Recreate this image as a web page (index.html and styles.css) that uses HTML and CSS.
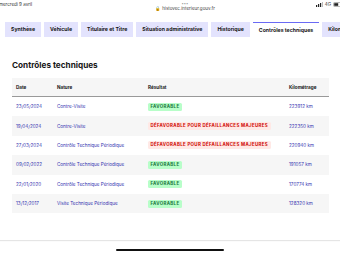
FILE: index.html
```html
<!DOCTYPE html>
<html lang="fr">
<head>
    <meta charset="UTF-8">
    <meta name="viewport" content="width=device-width, initial-scale=1.0">
    <title>HistoVec - Contrôles techniques</title>
    <link rel="stylesheet" href="styles.css">
</head>
<body>
    <div class="statusbar">
        <div class="status-left">mercredi 9 avril</div>
        <div class="status-center">
            <div class="dots">•••</div>
            <div class="url">&#128274; histovec.interieur.gouv.fr</div>
        </div>
        <div class="status-right">
            <svg width="7" height="5" viewBox="0 0 7 5"><rect x="0" y="3" width="1.2" height="2" fill="#222"/><rect x="2" y="2" width="1.2" height="3" fill="#222"/><rect x="4" y="1" width="1.2" height="4" fill="#222"/><rect x="6" y="0" width="1" height="5" fill="#bbb"/></svg>
            <span>4G</span>
            <svg width="9" height="5" viewBox="0 0 9 5"><rect x="0.5" y="0.5" width="7" height="4" rx="1" fill="none" stroke="#888" stroke-width="0.6"/><rect x="1.2" y="1.2" width="4" height="2.6" fill="#222"/><rect x="8" y="1.6" width="0.8" height="1.8" fill="#888"/></svg>
        </div>
    </div>

    <nav class="tabs">
        <div class="tab">Synthèse</div>
        <div class="tab">Véhicule</div>
        <div class="tab">Titulaire et Titre</div>
        <div class="tab">Situation administrative</div>
        <div class="tab">Historique</div>
        <div class="tab active">Contrôles techniques</div>
        <div class="tab">Kilométrage</div>
    </nav>

    <section class="panel">
        <h2>Contrôles techniques</h2>
        <table class="ct-table">
            <thead>
                <tr>
                    <th class="col-date">Date</th>
                    <th class="col-nature">Nature</th>
                    <th class="col-result">Résultat</th>
                    <th class="col-km">Kilométrage</th>
                </tr>
            </thead>
            <tbody>
                <tr>
                    <td>23/05/2024</td>
                    <td>Contre-Visite</td>
                    <td><span class="badge ok">Favorable</span></td>
                    <td>223912 km</td>
                </tr>
                <tr>
                    <td>19/04/2024</td>
                    <td>Contre-Visite</td>
                    <td><span class="badge ko">Défavorable pour défaillances majeures</span></td>
                    <td>222350 km</td>
                </tr>
                <tr>
                    <td>27/03/2024</td>
                    <td>Contrôle Technique Périodique</td>
                    <td><span class="badge ko">Défavorable pour défaillances majeures</span></td>
                    <td>220940 km</td>
                </tr>
                <tr>
                    <td>09/02/2022</td>
                    <td>Contrôle Technique Périodique</td>
                    <td><span class="badge ok">Favorable</span></td>
                    <td>191057 km</td>
                </tr>
                <tr>
                    <td>22/01/2020</td>
                    <td>Contrôle Technique Périodique</td>
                    <td><span class="badge ok">Favorable</span></td>
                    <td>170774 km</td>
                </tr>
                <tr>
                    <td>13/12/2017</td>
                    <td>Visite Technique Périodique</td>
                    <td><span class="badge ok">Favorable</span></td>
                    <td>128320 km</td>
                </tr>
            </tbody>
        </table>
    </section>

    <div class="bottom-buttons">
        <div class="btn b1"></div>
        <div class="btn b2"></div>
        <div class="btn b3"></div>
    </div>
    <div class="home-indicator"></div>
</body>
</html>
```

FILE: styles.css
```css
body {
    margin: 0;
    background-color: white;
    font-family: Inter, "Open Sans", sans-serif;
    color: #161616;
    width: 340px;
    height: 255px;
    overflow: hidden;
    position: relative;
}
.statusbar {
    display: flex;
    justify-content: space-between;
    align-items: flex-start;
    height: 17px;
    font-size: 4.5px;
    color: #333;
}
.status-left {
    margin-left: -1px;
    padding-top: 2px;
}
.status-center {
    text-align: center;
    padding-left: 22px;
}
.dots {
    font-size: 4px;
    color: #999;
    line-height: 5px;
    padding-top: 1px;
}
.url {
    line-height: 6px;
    color: #444;
}
.status-right {
    display: flex;
    align-items: center;
    gap: 2px;
    padding-top: 2px;
    margin-right: -2px;
}
.tabs {
    display: flex;
    gap: 3px;
    padding: 5px 0 0 5px;
    white-space: nowrap;
    overflow: hidden;
}
.tab {
    flex: none;
    height: 15px;
    line-height: 15px;
    padding: 0 6px;
    background-color: #e3e3fd;
    font-size: 5.2px;
    font-weight: 700;
    color: #161616;
}
.tab.active {
    background-color: white;
    border-top: 1px solid #6a6af4;
    height: 14px;
    line-height: 14px;
}
.panel {
    height: 176px;
    padding: 0 11px 27px 12px;
    box-shadow: 0 1px 1px rgba(0,0,0,0.1);
}
h2 {
    margin: 0;
    padding-top: 22px;
    font-size: 8.2px;
    line-height: 12px;
    font-weight: 700;
}
.ct-table {
    width: 100%;
    margin-top: 7px;
    border-collapse: collapse;
    font-size: 4.6px;
}
.ct-table th {
    background-color: #f6f6f6;
    text-align: left;
    font-weight: 700;
    height: 18px;
    padding: 0;
    border-bottom: 1px solid #999;
}
.ct-table td {
    height: 19.4px;
    padding: 0;
    color: #3535b0;
}
.ct-table tbody tr:nth-child(even) td {
    background-color: #f6f6f6;
}
.col-date {
    width: 41px;
}
.col-date, .ct-table td:first-child {
    padding-left: 4px !important;
}
.col-nature {
    width: 91px;
}
.col-result {
    width: 141px;
}
.badge {
    display: inline-block;
    padding: 0 2.5px;
    height: 8px;
    line-height: 8px;
    border-radius: 1.5px;
    font-size: 4.4px;
    font-weight: 700;
    letter-spacing: 0.35px;
    text-transform: uppercase;
}
.badge.ok {
    background-color: #b8fec9;
    color: #18753c;
}
.badge.ko {
    background-color: #ffe9e6;
    color: #ce0500;
}
.bottom-buttons {
    display: flex;
    padding: 21px 0 0 44px;
    gap: 25px;
}
.btn {
    height: 10px;
    border-top: 1px solid #7b7bf0;
    border-radius: 2px 2px 0 0;
    background-color: white;
}
.b1 {
    width: 62px;
}
.b2 {
    width: 76px;
    margin-left: 1px;
}
.b3 {
    width: 68px;
    margin-left: -2px;
}
.home-indicator {
    position: absolute;
    left: 116px;
    top: 249px;
    width: 108px;
    height: 2px;
    border-radius: 1px;
    background-color: #111;
}
```
